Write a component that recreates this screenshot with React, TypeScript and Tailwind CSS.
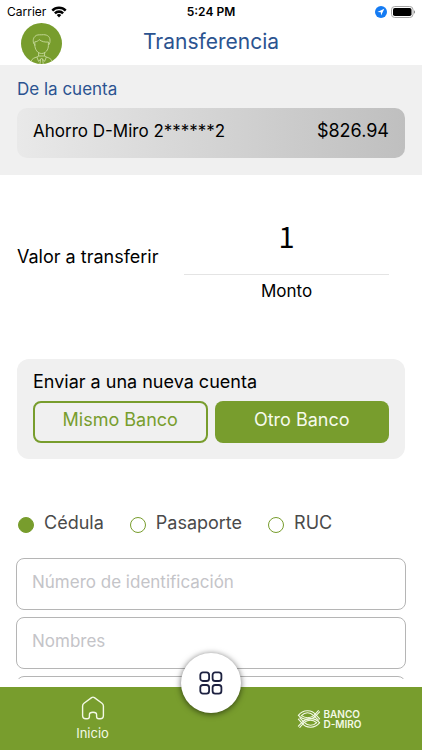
import { useState } from "react";

const documentTypes = ["Cédula", "Pasaporte", "RUC"];
const fields = ["Número de identificación", "Nombres", "Apellidos"];

function StatusBar() {
  return (
    <div className="grid h-[22px] shrink-0 grid-cols-3 items-center px-[7px] text-black">
      <div className="flex items-center gap-[5px] text-[12px]">
        <span>Carrier</span>
        <svg width="16" height="12" viewBox="0 0 16 12" aria-hidden="true">
          <path d="M0.4 3.7A10.6 10.6 0 0 1 15.6 3.7L13.8 5.5A8.2 8.2 0 0 0 2.2 5.5Z" />
          <path d="M3 6.4A7 7 0 0 1 13 6.4L11.2 8.2A4.6 4.6 0 0 0 4.8 8.2Z" />
          <path d="M5.7 9.1A3.3 3.3 0 0 1 10.3 9.1L8 11.4Z" />
        </svg>
      </div>
      <span className="text-center text-[12px] font-semibold">5:24 PM</span>
      <div className="flex items-center justify-end gap-1">
        <svg width="12" height="12" viewBox="0 0 12 12" aria-hidden="true">
          <circle cx="6" cy="6" r="6" fill="#147bf3" />
          <path d="M9.3 2.7L2.4 5.9L5.8 6.2L6.1 9.6Z" fill="#fff" />
        </svg>
        <svg width="24" height="12" viewBox="0 0 24 12" aria-hidden="true">
          <rect x="0.5" y="0.5" width="21.5" height="11" rx="3.2" fill="#fff" stroke="#a5a5a5" />
          <rect x="2" y="2" width="18.5" height="8" rx="1.8" />
          <path d="M22.9 4.2a2 2 0 0 1 0 3.6Z" fill="#8a8a8a" />
        </svg>
      </div>
    </div>
  );
}

function Avatar() {
  return (
    <svg width="41" height="41" viewBox="0 0 41 41" aria-hidden="true">
      <circle cx="20.5" cy="20.5" r="20.5" fill="#789d2d" />
      <g fill="none" stroke="#c6d99b" strokeWidth="0.9" strokeLinejoin="round" strokeLinecap="round">
        <path d="M13.4 21.5C11.6 20 11.8 15.2 14 13.4C15.4 11.6 18 11.8 20.8 11.8C25.4 11.2 28.9 13 29 17C29.1 19 28.9 20.7 27.8 21.8" />
        <path d="M13.8 22V18.8C15.8 18.8 17.4 17.8 18.2 16.6C20.6 18.6 24 19.4 27.4 19V22.5C27.4 26.8 24.6 30.5 20.6 30.5C16.6 30.5 13.8 26.5 13.8 22Z" />
        <path d="M17.6 29.6V33H23.6V29.6" />
        <path d="M17.6 33L15.9 34.2L17.6 38.4L20.6 35L23.6 38.4L25.3 34.2L23.6 33" />
        <path d="M15.9 34C13 34.8 11 35.8 10.4 37.6M25.3 34C28.2 34.8 30.2 35.8 30.8 37.6M19.6 36.4L19 40.8M21.6 36.4L22.2 40.8" />
      </g>
    </svg>
  );
}

function BankLogo() {
  return (
    <svg width="24" height="20" viewBox="0 0 24 20" fill="none" stroke="#f3f9e6" strokeWidth="1.1" strokeLinecap="round" strokeLinejoin="round" aria-hidden="true">
      <path d="M1.4 6.4C6 0.4 14.6 0.2 19 5.8L22.6 9.8" />
      <path d="M4.4 6.6C8 2.8 13 2.8 16.8 6.6L21.4 11.2" />
      <path d="M1.4 6.4C6 11.4 14.6 11.6 19 6.6L22.6 2.8" />
      <path d="M4.4 6.6C8 9.2 13 9.4 16.8 6.6L21.4 1.6" />
      <path d="M22.6 13.6C18 8.4 9.6 8.2 5 13.4L1.4 17.2" />
      <path d="M19.6 13.6C16 10.6 11 10.6 7.2 13.4L2.8 18.4" />
      <path d="M22.6 13.6C18 19.6 9.4 19.8 5 14.2L1.4 10.2" />
      <path d="M19.6 13.6C16 17.2 11 17.2 7.2 13.4L2.8 8.8" />
    </svg>
  );
}

export default function App() {
  const [documentType, setDocumentType] = useState("Cédula");
  const [amount, setAmount] = useState("1");

  return (
    <div className="flex h-screen flex-col overflow-hidden bg-white font-['Inter',sans-serif] text-[18px] leading-6 text-black">
      <StatusBar />
      <header className="grid h-[43px] shrink-0 grid-cols-[41px_1fr_41px] items-center px-[21px]">
        <button aria-label="Perfil" className="rounded-full">
          <Avatar />
        </button>
        <h1 className="pb-1 text-center text-[21px] text-[#2b5390]">Transferencia</h1>
      </header>

      <main className="min-h-0 flex-1 overflow-hidden">
        <section className="h-[110px] bg-[#f0f0f0] px-[17px] pt-3">
          <h2 className="text-[17px] text-[#2b5390]">De la cuenta</h2>
          <div className="mt-[7px] flex h-[50px] items-center justify-between rounded-[10px] bg-linear-to-r from-[#e9e9e9] to-[#bfbfbf] px-4 pb-1">
            <span className="text-[17px]">Ahorro D-Miro 2******2</span>
            <span>$826.94</span>
          </div>
        </section>

        <section className="mt-10 grid grid-cols-[151px_1fr] items-center gap-4 pr-[33px] pl-[17px]">
          <label htmlFor="amount" className="pb-1">
            Valor a transferir
          </label>
          <div className="text-center">
            <input
              id="amount"
              inputMode="decimal"
              value={amount}
              onChange={(event) => setAmount(event.target.value)}
              className="h-[60px] w-full border-b border-[#e4e4e4] pb-5 text-center font-['Noto_Sans_CJK_SC',sans-serif] text-[29px] outline-none"
            />
            <p className="mt-1 text-[17px]">Monto</p>
          </div>
        </section>

        <section className="mx-[17px] mt-[56px] h-[100px] rounded-xl bg-[#f0f0f0] px-4 pt-[11px]">
          <h2>Enviar a una nueva cuenta</h2>
          <div className="mt-[7px] grid grid-cols-2 gap-[7px]">
            <button className="h-[42px] rounded-lg border-2 border-[#789d2d] pb-1 text-[#789d2d]">Mismo Banco</button>
            <button className="h-[42px] rounded-lg bg-[#789d2d] pb-1 text-[#f6faec]">Otro Banco</button>
          </div>
        </section>

        <div role="radiogroup" aria-label="Tipo de documento" className="mt-[52px] flex gap-[26px] px-[18px] text-[#4a4a4a]">
          {documentTypes.map((type) => (
            <label key={type} className="flex items-center gap-[10px]">
              <input
                type="radio"
                name="document"
                checked={documentType === type}
                onChange={() => setDocumentType(type)}
                className="mt-1 size-4 appearance-none rounded-full border border-[#789d2d] checked:bg-[#789d2d]"
              />
              {type}
            </label>
          ))}
        </div>

        <form className="mt-[23px] flex max-h-[121px] flex-col gap-[7px] overflow-hidden px-4">
          {fields.map((field) => (
            <input
              key={field}
              aria-label={field}
              placeholder={field}
              className="h-[52px] w-full shrink-0 rounded-lg border border-[#b5b5b5] px-[15px] pb-1 text-[17px] outline-none placeholder:text-[#c4c4c8]"
            />
          ))}
        </form>
      </main>

      <nav className="relative grid h-[63px] shrink-0 grid-cols-[185px_1fr_185px] bg-[#789d2d] text-[#f3f9e6]">
        <a href="#inicio" className="flex flex-col items-center pt-[9px] text-[13px] leading-4">
          <svg width="24" height="24" viewBox="0 0 24 24" fill="none" stroke="currentColor" strokeWidth="1.4" strokeLinejoin="round" aria-hidden="true">
            <path d="M10.6 1.6Q12 0.6 13.4 1.6L21 7.2Q22.4 8.3 22.4 10V19.6Q22.4 22.8 19.2 22.8H17.8Q15.6 22.8 15.6 20.6V18.8Q15.6 16.2 12 16.2Q8.4 16.2 8.4 18.8V20.6Q8.4 22.8 6.2 22.8H4.8Q1.6 22.8 1.6 19.6V10Q1.6 8.3 3 7.2Z" />
          </svg>
          <span className="mt-[5px]">Inicio</span>
        </a>
        <button
          aria-label="Menú"
          className="absolute -top-[34px] left-1/2 flex size-[60px] -translate-x-1/2 items-center justify-center rounded-full bg-white shadow-[0_1px_6px_rgba(0,0,0,0.6)]"
        >
          <svg width="24" height="24" viewBox="0 0 24 24" fill="none" stroke="#1d2140" strokeWidth="1.8" aria-hidden="true">
            <rect x="1.3" y="1.4" width="8.8" height="8.6" rx="2.6" />
            <rect x="13.6" y="1.4" width="8.8" height="8.6" rx="2.6" />
            <rect x="1.3" y="14" width="8.8" height="8.6" rx="2.6" />
            <rect x="13.6" y="14" width="8.8" height="8.6" rx="2.6" />
          </svg>
        </button>
        <a href="#banco" className="col-start-3 flex items-center justify-center gap-[2px] text-[10px] leading-[10px] font-semibold">
          <BankLogo />
          <span>
            BANCO
            <br />
            D-MIRO
          </span>
        </a>
      </nav>
    </div>
  );
}
